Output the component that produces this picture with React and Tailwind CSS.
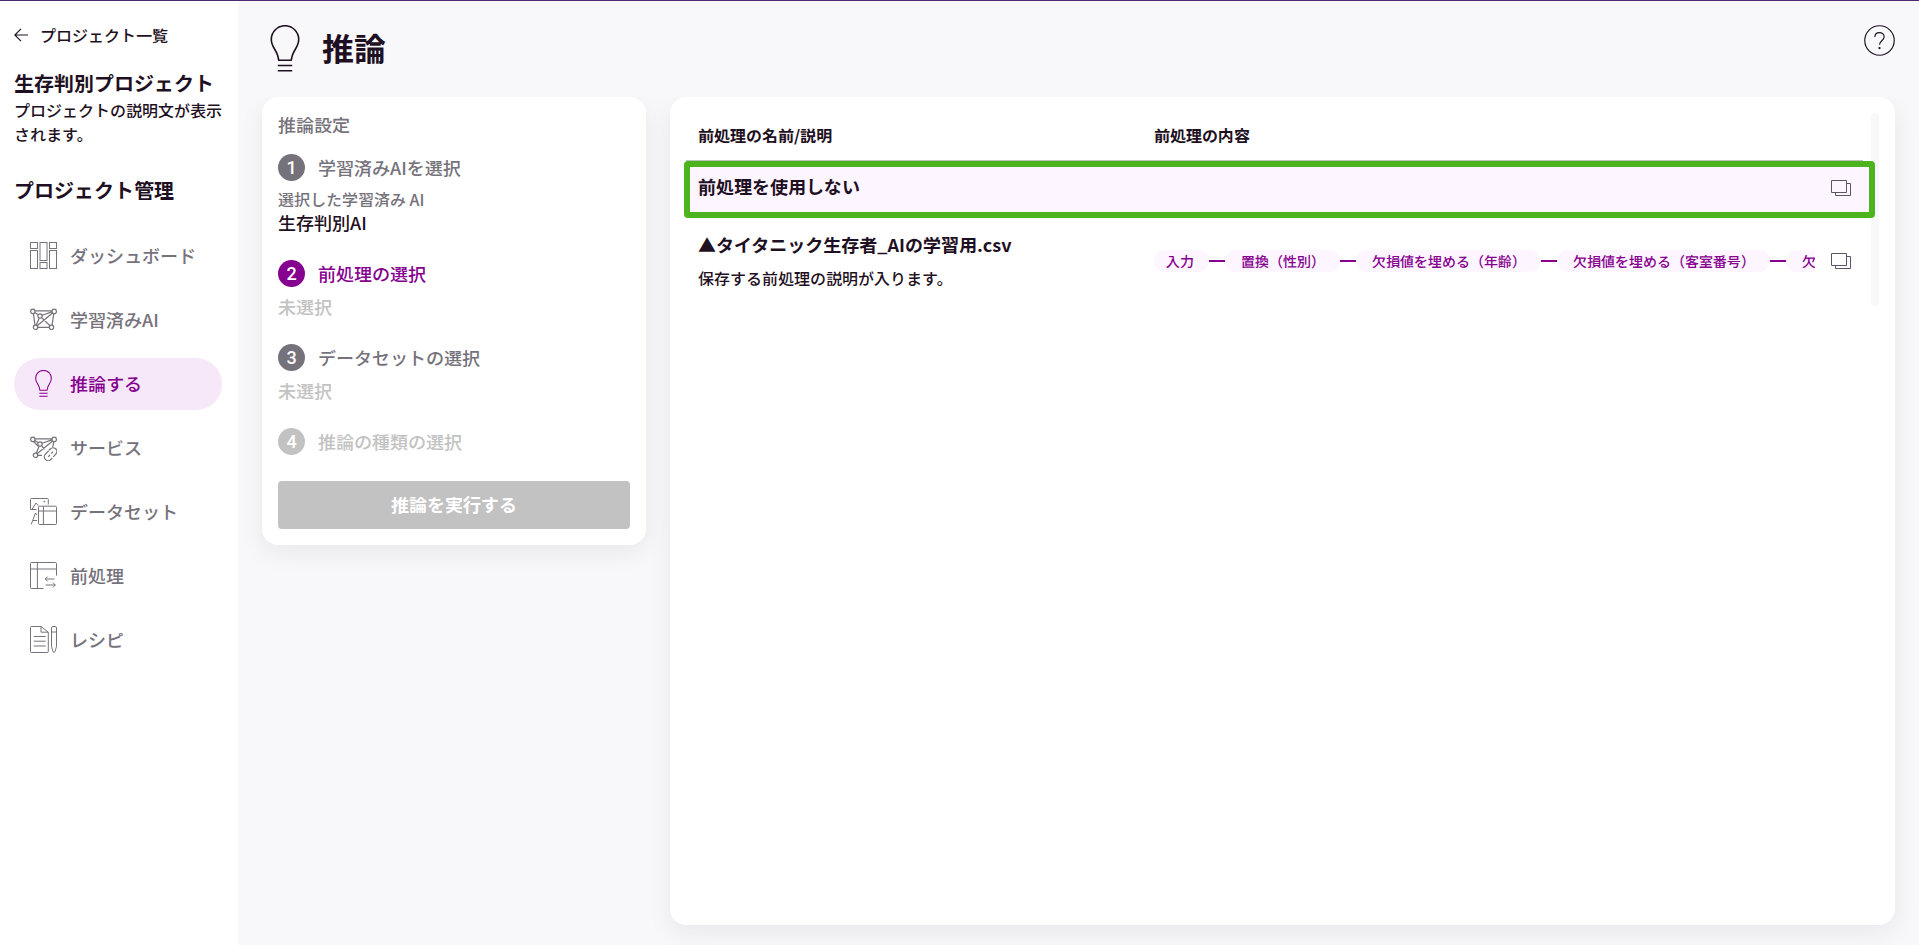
import React from "react";

function Svg({ className = "h-[27px] w-[27px]", viewBox = "0 0 27 27", strokeWidth = 1, children }) {
  return (
    <svg
      aria-hidden="true"
      className={`shrink-0 ${className}`}
      viewBox={viewBox}
      fill="none"
      stroke="currentColor"
      strokeWidth={strokeWidth}
    >
      {children}
    </svg>
  );
}

function DashboardIcon() {
  return (
    <Svg>
      <rect x="0.5" y="0.5" width="7" height="6" />
      <rect x="0.5" y="8.5" width="7" height="18" />
      <rect x="10" y="0.5" width="7" height="18" />
      <rect x="10" y="20.5" width="7" height="6" />
      <rect x="19.5" y="0.5" width="7" height="6" />
      <rect x="19.5" y="8.5" width="7" height="18" />
    </Svg>
  );
}

function ModelIcon() {
  return (
    <Svg strokeWidth={1.2}>
      <circle cx="2.8" cy="5.4" r="2.2" />
      <circle cx="24.2" cy="5.4" r="2.2" />
      <circle cx="10" cy="10" r="2.2" />
      <circle cx="5.5" cy="21.3" r="2.2" />
      <circle cx="21.5" cy="21.3" r="2.2" />
      <path d="M5 4.8H22M4.8 6.4L8 8.6M12.1 9.2L22 5.9M3.4 7.6L5 19.1M9.2 12.1L6.3 19.2M11.5 11.6L20 19.7M22.6 7L7.1 19.7M23.8 7.6L22 19.1M7.7 21.3H19.3" />
    </Svg>
  );
}

function ServiceIcon() {
  return (
    <Svg strokeWidth={1.2}>
      <circle cx="2.8" cy="5.4" r="2.2" />
      <circle cx="24.2" cy="5.4" r="2.2" />
      <circle cx="10" cy="10" r="2.2" />
      <circle cx="5.5" cy="21.3" r="2.2" />
      <path d="M5 4.8H22M4.8 6.4L8 8.6M12.1 9.2L22 5.9M3.6 7.5L8 12M9.2 12.1L6.3 19.2M11.5 11.6L14.5 15.4M22.6 7L7.1 19.7M23.8 7.6L22.7 13M7.7 21.3H12" />
      <g transform="rotate(-47 20.6 20.2)">
        <path d="M19 24H17A3.8 3.8 0 0 1 17 16.4H22M22.5 16.4H24.2A3.8 3.8 0 0 1 24.2 24H20.5M17 20.2H19.8M21.4 20.2H24.2" />
      </g>
    </Svg>
  );
}

function DatasetIcon() {
  return (
    <Svg>
      <path d="M6.5 11.5H0.5V1.5A1 1 0 0 1 1.5 0.5H17.3A1 1 0 0 1 18.3 1.5V6.5M2.2 11L6 5L8.3 7.5M1.2 26.5L5.5 15L7 17M2.8 22.5H7" />
      <circle cx="14.3" cy="3.6" r="0.5" />
      <rect x="8.5" y="8.2" width="18" height="18.3" rx="1" />
      <path d="M13.4 8.2V26.5M8.5 13H26.5" />
    </Svg>
  );
}

function PreprocessIcon() {
  return (
    <Svg>
      <path d="M26.5 13.5V1.5A1 1 0 0 0 25.5 0.5H1.5A1 1 0 0 0 0.5 1.5V25.5A1 1 0 0 0 1.5 26.5H13.5M7.4 0.5V26.5M0.5 7H26.5" />
      <path d="M24.5 17H15.2M17.7 14.5L15.2 17L17.7 19.5M15.7 23H25.3M22.8 20.5L25.3 23L22.8 25.5" />
    </Svg>
  );
}

function RecipeIcon() {
  return (
    <Svg>
      <path d="M11 0.5H1.5A1 1 0 0 0 0.5 1.5V25.5A1 1 0 0 0 1.5 26.5H17.3A1 1 0 0 0 18.3 25.5V6.2L11 0.5V6.2H18.3M3.7 10.5H15.7M3.7 15.2H15.7M3.7 20H15.7" />
      <path d="M21.5 2A1.5 1.5 0 0 1 23 0.5H25A1.5 1.5 0 0 1 26.5 2V20.5L25 25.7Q24 27 23 25.7L21.5 20.5ZM21.5 6H26.5" />
    </Svg>
  );
}

function BulbIcon({ className = "h-[27px] w-[27px]", strokeWidth = 1.8 }) {
  return (
    <Svg className={className} viewBox="0 0 29 47" strokeWidth={strokeWidth}>
      <path d="M8.3 35.3L7.2 30.5C5.6 24.8 0.8 21.5 0.8 14.4A13.7 13.7 0 0 1 28.2 14.4C28.2 21.5 23.4 24.8 21.8 30.5L20.7 35.3ZM7.3 40.5H21.7M7.3 45.7H21.7" />
    </Svg>
  );
}

function CopyIcon() {
  return (
    <Svg className="h-4 w-5" viewBox="0 0 20 16">
      <path d="M0.5 0.5H15.5V12.5H0.5ZM15.5 3.5H19.5V15.5H4.5V12.5" />
    </Svg>
  );
}

const menu = [
  { label: "ダッシュボード", Icon: DashboardIcon },
  { label: "学習済みAI", Icon: ModelIcon },
  { label: "推論する", Icon: BulbIcon, active: true },
  { label: "サービス", Icon: ServiceIcon },
  { label: "データセット", Icon: DatasetIcon },
  { label: "前処理", Icon: PreprocessIcon },
  { label: "レシピ", Icon: RecipeIcon },
];

const flow = [
  "入力",
  "置換（性別）",
  "欠損値を埋める（年齢）",
  "欠損値を埋める（客室番号）",
  "欠損値を埋める（運賃）",
];

function Sidebar() {
  return (
    <aside className="w-[238px] shrink-0 bg-white pt-[18px] pr-4 pl-3.5">
      <a href="#projects" className="flex h-8 items-center gap-3 text-base font-medium">
        <Svg className="h-3.5 w-3.5" viewBox="0 0 14 14" strokeWidth={1.2}>
          <path d="M7 0.8L0.8 7L7 13.2M0.8 7H14" />
        </Svg>
        プロジェクト一覧
      </a>
      <h2 className="mt-[17px] text-xl leading-[30px] font-bold whitespace-nowrap">生存判別プロジェクト</h2>
      <p className="text-base leading-6 font-medium">プロジェクトの説明文が表示されます。</p>
      <h3 className="mt-7 text-xl leading-8 font-bold">プロジェクト管理</h3>
      <nav className="mt-6 flex flex-col gap-3">
        {menu.map(({ label, Icon, active }) => (
          <a
            key={label}
            href="#menu"
            aria-current={active ? "page" : undefined}
            className={`flex h-[52px] items-center gap-[13px] rounded-full pb-0.5 pl-4 text-lg font-medium whitespace-nowrap ${
              active ? "bg-[#f6e7f9] text-[#86008f]" : "text-[#76727b]"
            }`}
          >
            <Icon />
            {label}
          </a>
        ))}
      </nav>
    </aside>
  );
}

function Step({ number, title, tone, children }) {
  const tones = {
    done: ["bg-[#76727b]", "text-[#76727b]"],
    current: ["bg-[#86008f]", "text-[#86008f]"],
    disabled: ["bg-[#c2c2c2]", "text-[#c2c2c2]"],
  };
  const [circle, text] = tones[tone];
  return (
    <li>
      <div className="flex items-center gap-[13px]">
        <span
          className={`flex h-[27px] w-[27px] items-center justify-center rounded-full font-[Roboto,sans-serif] text-lg font-medium text-white ${circle}`}
        >
          {number}
        </span>
        <span className={`text-lg leading-[27px] font-medium ${text}`}>{title}</span>
      </div>
      {children}
    </li>
  );
}

function Unselected() {
  return <p className="mt-1.5 pb-px text-lg leading-[26px] font-medium text-[#c2c2c2]">未選択</p>;
}

function Settings() {
  return (
    <section className="w-96 shrink-0 self-start rounded-2xl bg-white p-4 shadow-[0_8px_24px_rgba(30,16,34,0.07)]">
      <h2 className="text-lg leading-[22px] font-medium text-[#76727b]">推論設定</h2>
      <ol className="mt-[19px] flex flex-col gap-6">
        <Step number="1" title="学習済みAIを選択" tone="done">
          <p className="mt-1.5 text-base leading-6 font-medium text-[#76727b]">選択した学習済み AI</p>
          <p className="pb-[3px] text-lg leading-[22px] font-medium">生存判別AI</p>
        </Step>
        <Step number="2" title="前処理の選択" tone="current">
          <Unselected />
        </Step>
        <Step number="3" title="データセットの選択" tone="done">
          <Unselected />
        </Step>
        <Step number="4" title="推論の種類の選択" tone="disabled" />
      </ol>
      <button
        type="button"
        disabled
        className="mt-[26px] flex h-12 w-full items-center justify-center rounded bg-[#c2c2c2] pb-0.5 text-lg font-bold text-white"
      >
        推論を実行する
      </button>
    </section>
  );
}

function CopyButton() {
  return (
    <button type="button" aria-label="複製" className="block text-[#5f5467]">
      <CopyIcon />
    </button>
  );
}

function PreprocessTable() {
  return (
    <section className="min-w-0 flex-1 rounded-2xl bg-white p-4 shadow-[0_8px_24px_rgba(30,16,34,0.07)]">
      <div className="isolate flex gap-2">
        <div className="z-10 min-w-0 flex-1">
          <table className="w-full table-fixed border-collapse text-left">
            <colgroup>
              <col className="w-[456px]" />
              <col />
              <col className="w-12" />
            </colgroup>
            <thead>
              <tr className="h-[47px] border-b border-[#c2c2c2]">
                <th className="pb-0.5 pl-3 text-base font-bold">前処理の名前/説明</th>
                <th className="pb-0.5 pl-3 text-base font-bold">前処理の内容</th>
                <th aria-label="操作" />
              </tr>
            </thead>
            <tbody>
              <tr className="relative h-14">
                <td className="pb-1 pl-3 text-lg font-bold">
                  <span className="absolute top-px -right-3 -bottom-0.5 -left-0.5 -z-10 rounded border-6 border-[#4cb41e] bg-[#fdf5ff]" />
                  前処理を使用しない
                </td>
                <td />
                <td className="pl-4">
                  <CopyButton />
                </td>
              </tr>
              <tr className="h-[90px]">
                <td className="pb-0.5 pl-3 whitespace-nowrap">
                  <p className="text-lg leading-7 font-bold">▲タイタニック生存者_AIの学習用.csv</p>
                  <p className="mt-2 text-base leading-6 font-medium">保存する前処理の説明が入ります。</p>
                </td>
                <td className="pl-3">
                  <ul className="flex items-center overflow-hidden text-sm font-medium whitespace-nowrap text-[#86008f]">
                    {flow.map((step, i) => (
                      <li key={step} className="flex shrink-0 items-center">
                        {i > 0 && <span className="h-0.5 w-4 bg-[#86008f]" />}
                        <span
                          className={`rounded-full bg-[#fdf5ff] pr-[15px] leading-[22px] ${i > 0 ? "pl-4" : "pl-3"}`}
                        >
                          {step}
                        </span>
                      </li>
                    ))}
                  </ul>
                </td>
                <td className="pl-4">
                  <CopyButton />
                </td>
              </tr>
            </tbody>
          </table>
        </div>
        <div className="w-2 rounded-full bg-[#f8f8fa]" />
      </div>
    </section>
  );
}

export default function App() {
  return (
    <div className="flex min-h-screen border-t border-[#4b2a70] bg-[#f8f8fa] font-['Noto_Sans_JP','Noto_Sans_CJK_JP',sans-serif] text-[#1e1022]">
      <Sidebar />
      <main className="flex min-w-0 flex-1 flex-col">
        <header className="relative z-10 flex h-24 items-start justify-between bg-[#f8f8fa] px-6 pt-6">
          <h1 className="flex items-start gap-[22px] pl-2 text-[32px] leading-[44px] font-bold">
            <BulbIcon className="h-[47px] w-[30px]" strokeWidth={1.6} />
            推論
          </h1>
          <button type="button" aria-label="ヘルプ">
            <Svg className="h-[31px] w-[31px]" viewBox="0 0 32 32" strokeWidth={1.2}>
              <circle cx="16" cy="16" r="15.2" />
              <path d="M11.2 12.5C11.2 6.3 20.8 6.3 20.8 12.3C20.8 16 16 16 16 20.5" />
              <circle cx="16" cy="23.8" r="0.6" fill="currentColor" />
            </Svg>
          </button>
        </header>
        <div className="flex flex-1 gap-6 px-6 pb-5">
          <Settings />
          <PreprocessTable />
        </div>
      </main>
    </div>
  );
}
